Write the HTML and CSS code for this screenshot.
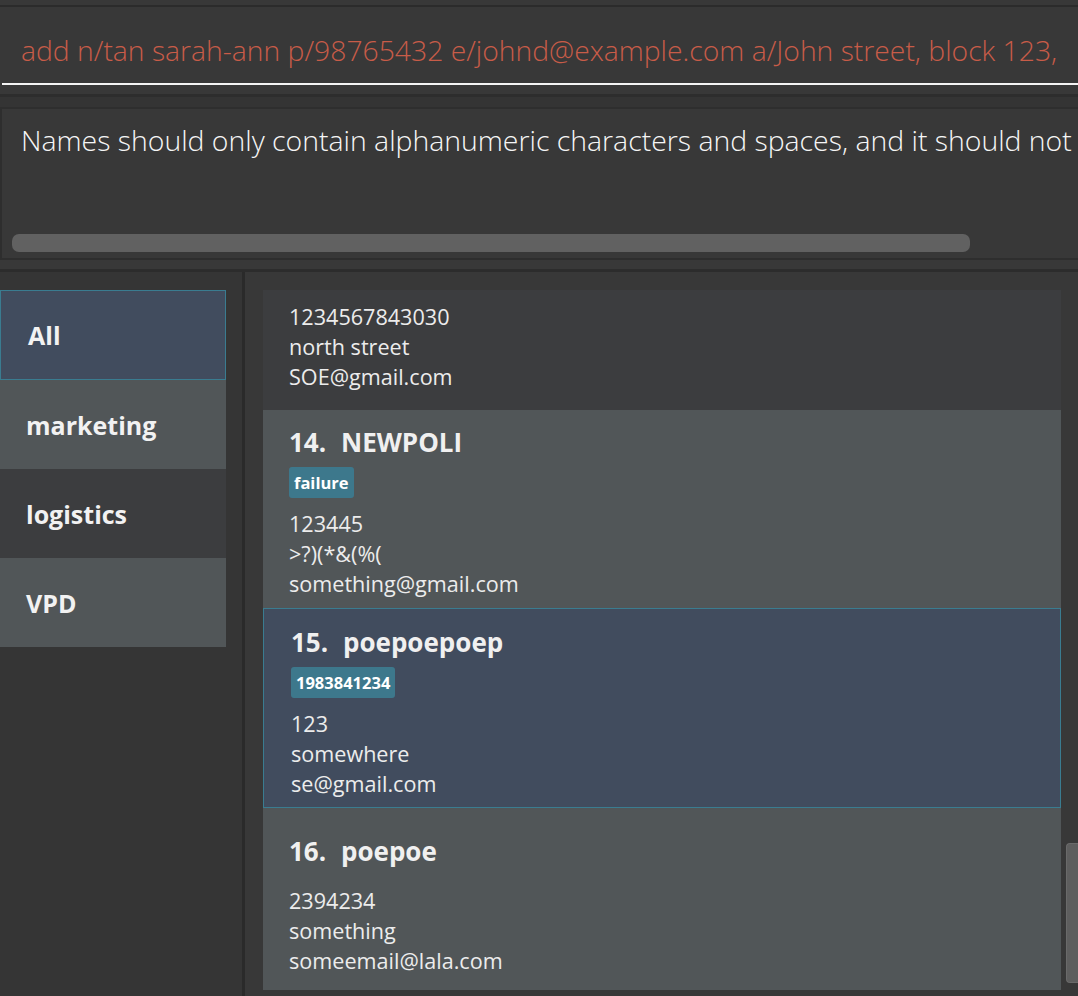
FILE: index.html
```html
<!DOCTYPE html>
<html>
<head>
<meta charset="utf-8">
<link rel="stylesheet" href="styles.css">
</head>
<body>
<div class="app">
  <div class="topline"></div>
  <div class="command">
    <div class="cmd-field">add n/tan sarah-ann p/98765432 e/johnd@example.com a/John street, block 123,</div>
  </div>
  <div class="sep1"></div>
  <div class="result">
    <div class="result-text">Names should only contain alphanumeric characters and spaces, and it should not be blank</div>
    <div class="hscroll"><div class="hthumb"></div></div>
  </div>
  <div class="sep2"></div>
  <div class="main">
    <nav class="sidebar">
      <div class="side-item selected">All</div>
      <div class="side-item light">marketing</div>
      <div class="side-item dark">logistics</div>
      <div class="side-item light">VPD</div>
    </nav>
    <div class="divider"></div>
    <div class="list">
      <div class="card dark card-top">
        <div class="line">1234567843030</div>
        <div class="line">north street</div>
        <div class="line">SOE@gmail.com</div>
      </div>
      <div class="card light card-tag">
        <div class="title"><span class="num">14.</span>NEWPOLI</div>
        <div class="tags"><span class="tag">failure</span></div>
        <div class="lines">
          <div class="line">123445</div>
          <div class="line">&gt;?)(*&amp;(%(</div>
          <div class="line">something@gmail.com</div>
        </div>
      </div>
      <div class="card selected card-tag card-sel">
        <div class="title"><span class="num">15.</span>poepoepoep</div>
        <div class="tags"><span class="tag">1983841234</span></div>
        <div class="lines">
          <div class="line">123</div>
          <div class="line">somewhere</div>
          <div class="line">se@gmail.com</div>
        </div>
      </div>
      <div class="card light card-notag">
        <div class="title"><span class="num">16.</span>poepoe</div>
        <div class="lines">
          <div class="line">2394234</div>
          <div class="line">something</div>
          <div class="line">someemail@lala.com</div>
        </div>
      </div>
      <div class="vthumb"></div>
    </div>
  </div>
</div>
</body>
</html>
```
FILE: styles.css
```css
* { box-sizing: border-box; }
html, body { margin: 0; padding: 0; }
body {
  background: #383838;
  font-family: "Open Sans", "Noto Sans", sans-serif;
  color: #f0f0f0;
  overflow: hidden;
}
.app { width: 1078px; height: 996px; overflow: hidden; display: flex; flex-direction: column; }

.topline { height: 7px; border-bottom: 2px solid #2b2b2b; background: #383838; }

.command { height: 87px; background: #383838; }
.cmd-field {
  margin-left: 2px;
  height: 78px;
  border-bottom: 2px solid #f4f4f4;
  padding: 23px 0 0 19px;
  font-size: 28.3px;
  font-weight: 300;
  line-height: 40px;
  color: #c85c48;
  white-space: nowrap;
  overflow: hidden;
}

.sep1 { height: 13px; border-top: 3px solid #2d2d2d; background: #343434; }

.result {
  height: 153px;
  border: 2px solid #2e2e2e;
  border-right: none;
  background: #383838;
  display: flex;
  flex-direction: column;
  overflow: hidden;
}
.result-text {
  padding: 14px 0 0 19px;
  font-size: 28.4px;
  font-weight: 300;
  line-height: 34px;
  color: #f6f6f6;
  white-space: nowrap;
  height: 125px;
}
.hscroll { height: 18px; padding-left: 10px; }
.hthumb { width: 958px; height: 18px; background: #616161; border-radius: 7px; }

.sep2 { height: 12px; border-bottom: 3px solid #2c2c2c; background: #383838; }

.main { flex: 1; display: flex; min-height: 0; }
.sidebar { width: 242px; background: #353535; padding-top: 18px; }
.side-item {
  width: 226px;
  height: 89px;
  padding-left: 26px;
  display: flex;
  align-items: center;
  font-weight: 700;
  font-size: 25px;
  color: #f2f2f2;
}
.side-item.selected { background: #414c5e; border: 1px solid #3a7c90; height: 90px; padding-left: 27px; }
.side-item.light { background: #515658; }
.side-item.dark { background: #3c3d3f; }

.divider { width: 3px; background: #2a2a2a; }

.list {
  flex: 1;
  position: relative;
  padding: 18px 0 0 18px;
  background: #383838;
}
.card { width: 798px; padding-left: 26px; color: #ececec; }
.card.dark { background: #3c3d3f; }
.card.light { background: #515658; }
.card.selected { background: #414c5e; border: 1px solid #3a7c90; padding-left: 27px; }

.line { font-size: 21.6px; line-height: 30px; white-space: nowrap; }
.title { font-size: 26px; font-weight: 700; line-height: 32px; color: #f0f0f0; white-space: nowrap; }
.num { display: inline-block; width: 52px; }
.tags { display: flex; }
.tag {
  background: #3d788c;
  color: #ffffff;
  font-size: 16.5px;
  font-weight: 700;
  height: 31px;
  line-height: 31px;
  padding: 0 5px;
  border-radius: 3px;
}

.card-top { height: 120px; padding-top: 12px; }
.card-tag { height: 198px; padding-top: 16px; }
.card-tag .tags { margin-top: 9px; }
.card-tag .lines { margin-top: 11px; }
.card-sel { height: 200px; padding-top: 17px; }
.card-notag { height: 182px; padding-top: 27px; }
.card-notag .lines { margin-top: 19px; }

.vthumb {
  position: absolute;
  right: 0;
  top: 571px;
  width: 12px;
  height: 140px;
  background: #5e5e5e;
  border: 1px solid #6a6a6a;
  border-right: none;
  border-radius: 4px 0 0 4px;
}
```
